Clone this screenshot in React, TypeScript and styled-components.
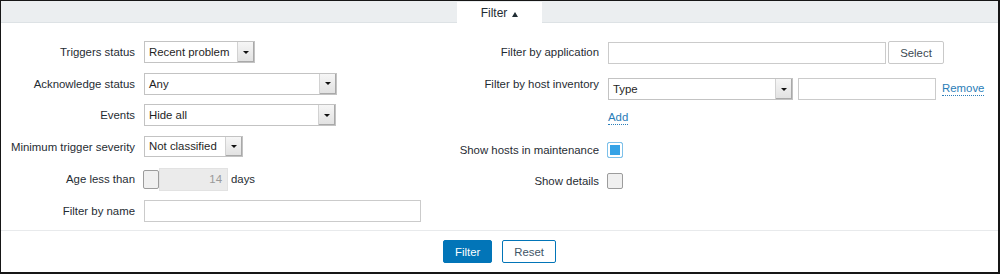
import React from "react";
import styled, { createGlobalStyle } from "styled-components";

const GlobalStyle = createGlobalStyle`
  html, body { margin: 0; padding: 0; background: #fff; }
  body {
    font-family: "Liberation Sans", Arial, sans-serif;
    font-size: 11.4px;
    color: #1f2c33;
  }
  * { box-sizing: border-box; }
`;

const Frame = styled.div`
  width: 1000px;
  height: 274px;
  border: 1px solid #161616;
  border-right-width: 2px;
  border-bottom-width: 2px;
  background: #fff;
  display: flex;
  flex-direction: column;
`;

const TabBar = styled.div`
  height: 22px;
  flex-shrink: 0;
  background: #ebeef0;
  border-bottom: 1px solid #dde2e5;
  display: flex;
  justify-content: center;
  align-items: flex-end;
`;

const Tab = styled.div`
  width: 85px;
  height: 21px;
  margin-bottom: -1px;
  background: #fff;
  display: flex;
  align-items: center;
  justify-content: center;
  gap: 5px;
  font-size: 12px;
  color: #1f2c33;
`;

const UpArrow = styled.span`
  width: 0;
  height: 0;
  margin-top: 3px;
  border-left: 3.5px solid transparent;
  border-right: 3.5px solid transparent;
  border-bottom: 5px solid #1f2c33;
`;

const FormBody = styled.div`
  height: 207px;
  flex-shrink: 0;
  padding-top: 18px;
  display: grid;
  grid-template-columns: 440px 1fr;
`;

const LeftColumn = styled.div`
  display: flex;
  flex-direction: column;
  gap: 9.66px;
`;

const RightColumn = styled.div`
  display: flex;
  flex-direction: column;
`;

const FieldRow = styled.div<{ $labelWidth: number; $mt?: number }>`
  display: grid;
  grid-template-columns: ${(p) => p.$labelWidth}px auto;
  align-items: start;
  margin-top: ${(p) => p.$mt ?? 0}px;
`;

const Label = styled.div<{ $lh?: number }>`
  text-align: right;
  padding-right: 9px;
  line-height: ${(p) => p.$lh ?? 22}px;
  white-space: nowrap;
  color: #1f2c33;
`;

const Controls = styled.div<{ $pt?: number }>`
  display: flex;
  align-items: center;
  padding-top: ${(p) => p.$pt ?? 0}px;
`;

const SelectBox = styled.div<{ $w: number; $h?: number }>`
  width: ${(p) => p.$w}px;
  height: ${(p) => p.$h ?? 22}px;
  border: 1px solid #c3c3c3;
  background: #fff;
  display: flex;
  align-items: stretch;
  color: #1f1f1f;
`;

const SelectText = styled.span`
  flex: 1;
  padding-left: 4px;
  display: flex;
  align-items: center;
  white-space: nowrap;
`;

const SelectButton = styled.span`
  width: 17px;
  background: linear-gradient(#f6f6f6, #e1e1e1);
  border-left: 1px solid #d2d2d2;
  box-shadow: inset -1px -1px 0 #a9a9a9;
  display: flex;
  align-items: center;
  justify-content: center;
`;

const DownArrow = styled.span`
  width: 0;
  height: 0;
  border-left: 3px solid transparent;
  border-right: 3px solid transparent;
  border-top: 3px solid #111;
`;

const TextInput = styled.div<{ $w: number; $h?: number; $disabled?: boolean; $ml?: number }>`
  width: ${(p) => p.$w}px;
  height: ${(p) => p.$h ?? 22}px;
  margin-left: ${(p) => p.$ml ?? 0}px;
  border: 1px solid ${(p) => (p.$disabled ? "#e2e2e2" : "#cbcbcb")};
  background: ${(p) => (p.$disabled ? "#ebebeb" : "#fff")};
  color: #9a9a9a;
  display: flex;
  align-items: center;
  justify-content: flex-end;
  padding-right: 5px;
`;

const Checkbox = styled.span<{ $checked?: boolean; $h?: number; $ml?: number }>`
  width: 16px;
  height: ${(p) => p.$h ?? 16}px;
  margin-left: ${(p) => p.$ml ?? 0}px;
  border-radius: 2px;
  border: 1px solid ${(p) => (p.$checked ? "#7ec1ea" : "#9c9c9c")};
  background: ${(p) => (p.$checked ? "#35a2e6" : "#f0f0f0")};
  box-shadow: ${(p) => (p.$checked ? "inset 0 0 0 2px #fff" : "none")};
  flex-shrink: 0;
`;

const Suffix = styled.span`
  margin-left: 3px;
`;

const SmallButton = styled.span`
  width: 56px;
  height: 23px;
  margin-left: 2px;
  border: 1px solid #c9c9c9;
  border-radius: 2px;
  background: #fff;
  display: flex;
  align-items: center;
  justify-content: center;
  color: #3c4a53;
`;

const Link = styled.span<{ $ml?: number }>`
  margin-left: ${(p) => p.$ml ?? 0}px;
  color: #2a7db8;
  border-bottom: 1px dotted #2a7db8;
  line-height: 13px;
`;

const AddLine = styled.div`
  margin-top: 10px;
  height: 16px;
  display: flex;
  align-items: center;
`;

const Footer = styled.div`
  border-top: 1px solid #e8eaec;
  padding: 9px 0;
  display: flex;
  justify-content: center;
  gap: 10px;
`;

const Button = styled.span<{ $primary?: boolean }>`
  height: 23px;
  padding: 0 11px;
  border-radius: 2px;
  border: 1px solid #0275b8;
  background: ${(p) => (p.$primary ? "#0275b8" : "#fff")};
  color: ${(p) => (p.$primary ? "#fff" : "#3f5566")};
  display: flex;
  align-items: center;
`;

const Select = ({ w, value, h }: { w: number; value: string; h?: number }) => (
  <SelectBox $w={w} $h={h}>
    <SelectText>{value}</SelectText>
    <SelectButton>
      <DownArrow />
    </SelectButton>
  </SelectBox>
);

const LEFT = 143;
const RIGHT = 167;

export default function App() {
  return (
    <>
      <GlobalStyle />
      <Frame>
        <TabBar>
          <Tab>
            Filter <UpArrow />
          </Tab>
        </TabBar>
        <FormBody>
          <LeftColumn>
            <FieldRow $labelWidth={LEFT}>
              <Label>Triggers status</Label>
              <Controls>
                <Select w={111} value="Recent problem" />
              </Controls>
            </FieldRow>
            <FieldRow $labelWidth={LEFT}>
              <Label>Acknowledge status</Label>
              <Controls>
                <Select w={193} value="Any" />
              </Controls>
            </FieldRow>
            <FieldRow $labelWidth={LEFT}>
              <Label>Events</Label>
              <Controls>
                <Select w={192} value="Hide all" />
              </Controls>
            </FieldRow>
            <FieldRow $labelWidth={LEFT}>
              <Label>Minimum trigger severity</Label>
              <Controls>
                <Select w={99} h={21} value="Not classified" />
              </Controls>
            </FieldRow>
            <FieldRow $labelWidth={LEFT}>
              <Label>Age less than</Label>
              <Controls>
                <Checkbox $h={19} $ml={-1} />
                <TextInput $w={69} $h={23} $disabled>14</TextInput>
                <Suffix>days</Suffix>
              </Controls>
            </FieldRow>
            <FieldRow $labelWidth={LEFT}>
              <Label>Filter by name</Label>
              <Controls>
                <TextInput $w={277} $h={22} />
              </Controls>
            </FieldRow>
          </LeftColumn>
          <RightColumn>
            <FieldRow $labelWidth={RIGHT}>
              <Label>Filter by application</Label>
              <Controls>
                <TextInput $w={278} $h={22} />
                <SmallButton>Select</SmallButton>
              </Controls>
            </FieldRow>
            <FieldRow $labelWidth={RIGHT} $mt={9}>
              <Label>Filter by host inventory</Label>
              <div>
                <Controls $pt={5}>
                  <Select w={185} value="Type" />
                  <TextInput $w={138} $h={22} $ml={5} />
                  <Link $ml={6}>Remove</Link>
                </Controls>
                <AddLine>
                  <Link>Add</Link>
                </AddLine>
              </div>
            </FieldRow>
            <FieldRow $labelWidth={RIGHT} $mt={16}>
              <Label $lh={16}>Show hosts in maintenance</Label>
              <Controls>
                <Checkbox $checked $ml={-1} />
              </Controls>
            </FieldRow>
            <FieldRow $labelWidth={RIGHT} $mt={15}>
              <Label $lh={16}>Show details</Label>
              <Controls>
                <Checkbox $ml={-1} />
              </Controls>
            </FieldRow>
          </RightColumn>
        </FormBody>
        <Footer>
          <Button $primary>Filter</Button>
          <Button>Reset</Button>
        </Footer>
      </Frame>
    </>
  );
}
